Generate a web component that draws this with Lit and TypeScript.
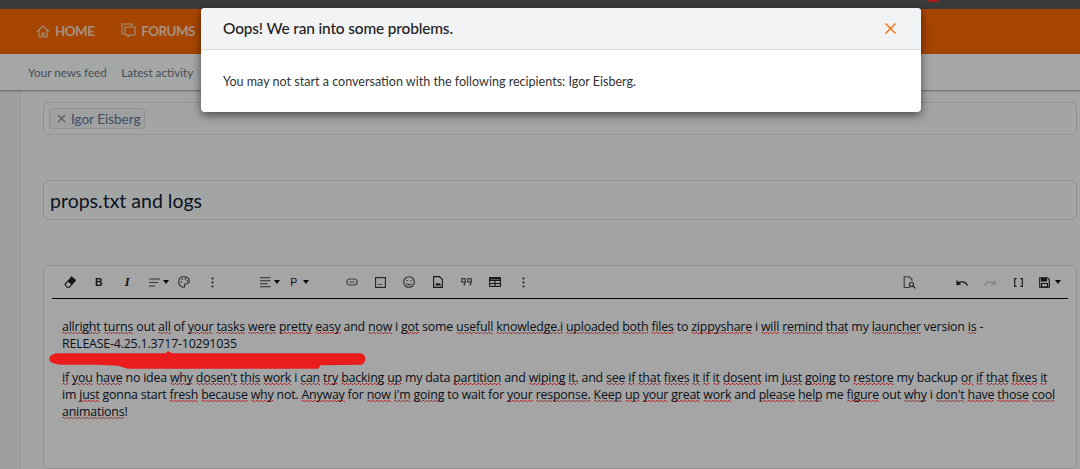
import { LitElement, html, css, svg } from "lit";
import { customElement } from "lit/decorators.js";

const squiggle = (text: string) =>
  text.split(/(_[^_]+_)/).map((p) =>
    p.startsWith("_") ? html`<span class="sp">${p.slice(1, -1)}</span>` : p
  );

const icon = (w: number, h: number, body: unknown) =>
  html`<svg width=${w} height=${h} viewBox="0 0 ${w} ${h}" fill="none" stroke="currentColor" stroke-width="1.100">${body}</svg>`;

const caret = html`<span class="caret"></span>`;

const I = {
  eraser: icon(12, 12, svg`<path d="M1 8.200l3-3.200 4 3.200-2.500 3H3z"/><path d="M4.500 4.500L7.500 1l4 3.300-3 3.500z" fill="currentColor"/>`),
  align: icon(11, 9, svg`<path d="M0 1h11M0 4.500h9M0 8h6" stroke="#555"/>`),
  palette: icon(12, 12, svg`<path d="M6 .8C2.800.8.700 3 .700 6s2.300 5.200 4.800 5.200c1.500 0 1.300-1.200 1-2-.3-1 .3-1.600 1.300-1.500 1.800.2 3.500-.4 3.500-2.400C11.300 2.600 9 .8 6 .8z" stroke="#444"/><circle cx="3.200" cy="6" r=".7" fill="currentColor" stroke="none"/><circle cx="4.300" cy="3.400" r=".7" fill="currentColor" stroke="none"/><circle cx="7.300" cy="3" r=".7" fill="currentColor" stroke="none"/><circle cx="9.300" cy="5" r=".7" fill="currentColor" stroke="none"/>`),
  dots: icon(3, 11, svg`<circle cx="1.500" cy="1.500" r="1" fill="currentColor" stroke="none"/><circle cx="1.500" cy="5.500" r="1" fill="currentColor" stroke="none"/><circle cx="1.500" cy="9.500" r="1" fill="currentColor" stroke="none"/>`),
  alignFull: icon(11, 11, svg`<path d="M0 .7h10.500M0 3.700h10.500M0 6.700h7.500M0 9.700h10.500" stroke="#444"/>`),
  link: icon(12, 8, svg`<rect x=".8" y="1" width="10.400" height="6" rx="3" stroke="#666"/><path d="M3.500 4h5" stroke="#666"/>`),
  image: icon(11, 11, svg`<rect x=".6" y=".6" width="9.800" height="9.800" stroke="#333"/><path d="M2.500 8l1-1.300 1 1 1-1.200 2 1.500z" fill="#555" stroke="none"/>`),
  smile: icon(12, 12, svg`<circle cx="6" cy="6" r="5.300" stroke="#444"/><circle cx="4" cy="4.600" r=".7" fill="currentColor" stroke="none"/><circle cx="8" cy="4.600" r=".7" fill="currentColor" stroke="none"/><path d="M3.500 7.500c1.200 1.500 3.800 1.500 5 0" stroke="#444"/>`),
  file: icon(10, 12, svg`<path d="M.6.600h5.800l3 3v7.800H.6z"/><path d="M2 9.500l2-3 1.500 1.500 1-1 2 2.500z" fill="currentColor" stroke="none"/>`),
  quote: icon(11, 8, svg`<rect x=".7" y=".7" width="3.600" height="3.400" rx=".6" stroke="#555" stroke-width="1.200"/><rect x="6.700" y=".7" width="3.600" height="3.400" rx=".6" stroke="#555" stroke-width="1.200"/><path d="M4.300 3c0 2-.8 3.500-1.600 4.500M10.300 3c0 2-.8 3.500-1.600 4.500" stroke="#555" stroke-width="1.200"/>`),
  table: icon(12, 10, svg`<rect x=".6" y=".6" width="10.800" height="8.800"/><path d="M.6 3.500h10.800M.6 6.500h10.800M6 3.500v6"/><path d="M.6 1.800h10.800" stroke-width="1.500"/>`),
  search: icon(13, 13, svg`<path d="M7 11.500H1.200V.8h5l2.800 3v1.500" stroke="#555"/><circle cx="8.500" cy="8.500" r="2" stroke="#333"/><path d="M10 10l2.300 2.300" stroke="#333"/>`),
  undo: icon(12, 7, svg`<path d="M11.300 6.500C10 3 6 2 2.500 3.800" stroke-width="1.400"/><path d="M.5 .8v5.400l4.700-.8z" fill="currentColor" stroke="none"/>`),
  redo: icon(12, 7, svg`<path d="M.7 6.500C2 3 6 2 9.500 3.800" stroke-width="1.400"/><path d="M11.500 .8v5.400l-4.700-.8z" fill="currentColor" stroke="none"/>`),
  brackets: icon(9, 9, svg`<path d="M2.500.6H.7v7.800h1.800M6.500.6h1.800v7.800H6.500"/>`),
  save: icon(11, 11, svg`<path d="M.7.700h7.800l1.800 1.800v7.800H.7z"/><path d="M2.500 1v3h5V1" fill="currentColor"/><rect x="2.500" y="6.500" width="6" height="3.500"/>`),
};

@customElement("app-root")
export class AppRoot extends LitElement {
  static styles = css`
    :host { display: block; width: 1080px; height: 469px; overflow: hidden; position: relative; font-family: Lato, sans-serif; }
    .page { display: flex; flex-direction: column; height: 469px; background: #f3f5f7; }
    .top { height: 9px; background: #5a5a5a; flex: none; }
    .nav { height: 45px; flex: none; background: #ff6a00; display: flex; align-items: center; padding: 0 0 2px 36px; box-sizing: border-box; gap: 27px; color: #ffddc4; font-weight: 700; font-size: 13.400px; letter-spacing: -0.55px; }
    .nav span { display: flex; align-items: center; gap: 5px; }
    .sub { height: 36px; flex: none; background: #fdffff; box-shadow: 0 1px 2px rgba(0,0,0,.4); display: flex; align-items: center; padding-left: 28px; gap: 14.500px; color: #6e7a80; font-size: 11.700px; position: relative; }
    .body { flex: 1; margin-left: 20px; background: #fbfefd; padding: 12px 3px 0 22px; display: flex; flex-direction: column; border-left: 1px solid #e4e6e8; min-height: 0; }
    .field { border: 1px solid #dfe1e1; border-radius: 4px; background: #fbfefd; }
    .tags { display: flex; align-items: center; padding-left: 5px; box-sizing: border-box; height: 33px; }
    .tag { display: flex; align-items: center; gap: 5px; height: 19px; padding: 0 3px 0 7px; background: #f5f6f7; border: 1px solid #dfe1e3; border-radius: 3px; font-size: 13.500px; color: #5f7a9a; }
    .title { margin-top: 45px; height: 40px; box-sizing: border-box; display: flex; align-items: center; padding-left: 6px; font-size: 19.500px; color: #111c33; }
    .editor { margin-top: 45px; flex: 1; padding: 0 8px; color: #222; background: #fdfdfd; }
    .bar { height: 32px; border-bottom: 1.500px solid #000; display: flex; align-items: center; padding-left: 4px; }
    .btn { width: 28.500px; height: 20px; display: flex; align-items: center; justify-content: center; gap: 3px; flex: none; font-family: "Liberation Sans", sans-serif; font-size: 10.500px; font-weight: 700; }
    .btn.wide { width: 35px; justify-content: flex-start; padding-left: 6px; box-sizing: border-box; gap: 5px; }
    .btn.i { font-style: italic; font-family: "Liberation Serif", serif; font-size: 12.500px; }
    .btn.p { font-weight: 400; margin-left: 1px; gap: 6px; }
    .btn.shift { padding-left: 6px; box-sizing: border-box; }
    .gap-a { width: 29px; flex: none; }
    .gap-b { width: 24px; flex: none; }
    .gap-c { width: 23.500px; flex: none; }
    .spacer { flex: 1; }
    .dim { color: #ccc; }
    .caret { width: 0; height: 0; border-left: 3.500px solid transparent; border-right: 3.500px solid transparent; border-top: 4px solid #111; }
    .text { padding: 19px 10px 0 10px; font-family: "Open Sans", sans-serif; font-size: 12.400px; line-height: 17px; letter-spacing: -0.2px; color: #10182a; }
    .sp { background: url("data:image/svg+xml,%3Csvg xmlns='http://www.w3.org/2000/svg' width='4' height='2'%3E%3Cpath d='M0 1.500L1 .5 2 .5 3 1.500 4 1.500' fill='none' stroke='%23ff1818' stroke-width='.9'/%3E%3C/svg%3E") repeat-x 0 calc(100% - 1px); }
    .hidden { height: 17px; padding-left: 258px; letter-spacing: 1px; }
    .backdrop { position: absolute; inset: 0; background: rgba(0,0,0,.35); }
    .modal { position: absolute; left: 201px; top: 8px; width: 720px; height: 104px; border-radius: 4px; background: #fff; box-shadow: 0 3px 10px rgba(0,0,0,.55); overflow: hidden; display: flex; flex-direction: column; }
    .mh { height: 39px; flex: none; background: #f2f3f5; border-bottom: 1px solid #d8d8d8; display: flex; align-items: center; justify-content: space-between; padding: 0 25px 2px 22px; font-size: 15.450px; font-weight: 500; color: #222; letter-spacing: -0.15px; }
    .mb { padding: 24px 22px 0; font-size: 12.550px; color: #333; line-height: 16px; }
    .x { color: #ff6a00; display: flex; padding-top: 2px; }
    .scribble { position: absolute; left: 48px; top: 350px; }
    .dot { position: absolute; left: 927px; top: 0; width: 12px; height: 2px; border-radius: 0 0 6px 6px; background: #a81c1c; }
  `;

  render() {
    return html`
      <div class="page">
        <div class="top"></div>
        <div class="nav">
          <span>${icon(14, 14, svg`<path d="M1 7.500L7 2l6 5.500M3 6.500V13h3V9h2v4h3V6.500"/>`)}HOME</span>
          <span>${icon(15, 15, svg`<path d="M3 11H1V1h10v2"/><path d="M4 4h10v8H9l-2 2v-2H4z"/>`)}FORUMS</span>
        </div>
        <div class="sub"><span>Your news feed</span><span>Latest activity</span></div>
        <div class="body">
          <div class="field tags">
            <div class="tag">${icon(9, 9, svg`<path d="M1 1l7 7M8 1l-7 7" stroke="#888"/>`)}Igor Eisberg</div>
          </div>
          <div class="field title">props.txt and logs</div>
          <div class="field editor">
            <div class="bar">
              <div class="btn">${I.eraser}</div>
              <div class="btn">B</div>
              <div class="btn i">I</div>
              <div class="btn shift">${I.align}${caret}</div>
              <div class="btn">${I.palette}</div>
              <div class="btn">${I.dots}</div>
              <div class="gap-a"></div>
              <div class="btn">${I.alignFull}${caret}</div>
              <div class="btn p">P${caret}</div>
              <div class="gap-b"></div>
              <div class="btn">${I.link}</div>
              <div class="btn">${I.image}</div>
              <div class="btn">${I.smile}</div>
              <div class="btn">${I.file}</div>
              <div class="btn">${I.quote}</div>
              <div class="btn">${I.table}</div>
              <div class="btn">${I.dots}</div>
              <div class="spacer"></div>
              <div class="btn">${I.search}</div>
              <div class="gap-c"></div>
              <div class="btn">${I.undo}</div>
              <div class="btn dim">${I.redo}</div>
              <div class="btn">${I.brackets}</div>
              <div class="btn wide">${I.save}${caret}</div>
            </div>
            <div class="text">
              <div>${squiggle("_allright_ _turns_ out _all_ of _your_ _tasks_ _were_ _pretty_ _easy_ and _now_ i _got_ some _usefull_ _knowledge.i_ _uploaded_ _both_ _files_ to _zippyshare_ i _will_ _remind_ _that_ my _launcher_ version _is_ -")}</div>
              <div>RELEASE-4.25.1.3717-10291035</div>
              <div class="hidden">........</div>
              <div>${squiggle("_if_ _you_ _have_ no idea _why_ _dosen't_ _this_ _work_ i _can_ _try_ _backing_ _up_ my data _partition_ and _wiping_ _it._ and _see_ _if_ _that_ _fixes_ _it_ _if_ _it_ _dosent_ im _just_ _going_ to _restore_ my backup _or_ _if_ _that_ _fixes_ _it_ im _just_ gonna start _fresh_ _because_ _why_ not. _Anyway_ for _now_ _i'm_ _going_ to wait for _your_ _response._ _Keep_ _up_ _your_ _great_ _work_ and _please_ _help_ me _figure_ out _why_ i _don't_ _have_ _those_ _cool_ _animations_!")}</div>
            </div>
          </div>
        </div>
      </div>
      <div class="backdrop"></div>
      <div class="modal">
        <div class="mh"><span>Oops! We ran into some problems.</span>
          <span class="x">${icon(11, 11, svg`<path d="M.5.500l10 10M10.500.500l-10 10" stroke-width="1.400"/>`)}</span></div>
        <div class="mb">You may not start a conversation with the following recipients: Igor Eisberg.</div>
      </div>
      <div class="dot"></div>
      <svg class="scribble" width="320" height="22" viewBox="0 0 320 22">
        <path d="M2 9 C2 6 6 4 12 4 L118 4 L120 2 L124 4 L312 4 C318 4 318 14 312 14 L272 14.500 L270 18 L80 18 L70 15 L50 14 L18 14 C8 14 2 12 2 9 Z" fill="#ea1c1c" stroke="#ea1c1c" stroke-width="1.500" stroke-linejoin="round"/>
      </svg>
    `;
  }
}
